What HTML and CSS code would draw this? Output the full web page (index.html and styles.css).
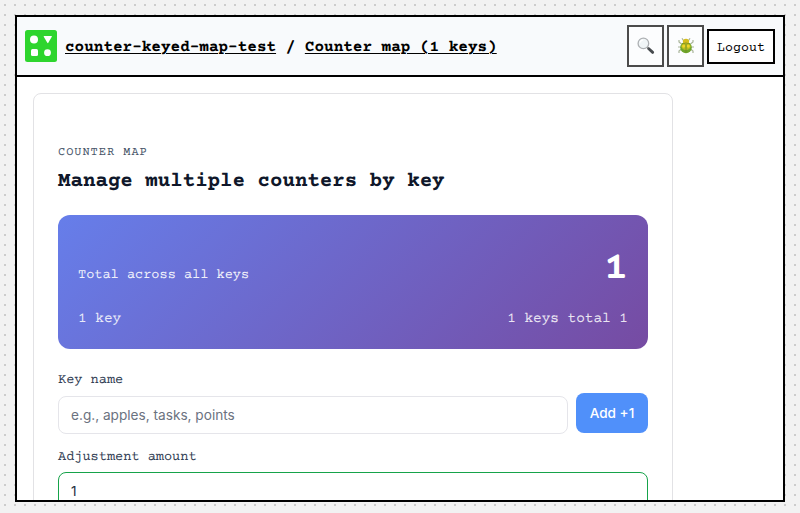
FILE: index.html
```html
<!DOCTYPE html>
<html lang="en">
<head>
<meta charset="utf-8">
<title>Counter map</title>
<link rel="stylesheet" href="styles.css">
</head>
<body>
<div class="window">
  <header class="bar">
    <svg class="logo" width="32" height="32" viewBox="0 0 32 32">
      <rect width="32" height="32" rx="2.5" fill="#2ed52e"/>
      <g fill="#fff"><circle cx="9" cy="9.5" r="4"/><path d="M19.2 6h7.2q.8 0 .4.8l-3.5 6q-.5.8-1 0l-3.5-6q-.4-.8.4-.8z"/><rect x="6" y="19" width="7" height="7" rx="1.5"/><circle cx="22.5" cy="22.7" r="3.4"/></g>
    </svg>
    <h1 class="crumbs"><a>counter-keyed-map-test</a> / <a>Counter map (1 keys)</a></h1>
    <div class="actions">
      <button class="tool" aria-label="Search"><svg width="18" height="18" viewBox="0 0 18 18"><path d="M11.5 11.5l4.2 3.9" stroke="#464a4e" stroke-width="2.8" stroke-linecap="round"/><path d="M9.7 9.7l1.7 1.6" stroke="#888" stroke-width="1.4"/><circle cx="6.4" cy="6.4" r="5.3" fill="#f0f5f7" stroke="#adb0b3" stroke-width="1.3"/><path d="M3 5.5q.7-2.3 3-2.6" fill="none" stroke="#fff" stroke-width="1.2"/></svg></button>
      <button class="tool" aria-label="Debug"><svg width="18" height="18" viewBox="0 0 18 18"><path d="M6.7 4L5 1.3M11.3 4L13 1.3M4.5 7L2 5V3M13.5 7l2.5-2V3M4 10H1M14 10h3M4.5 12L2 14v2M13.5 12l2.5 2v2" fill="none" stroke="#a9b59a" stroke-width="1.2"/><ellipse cx="9" cy="10.5" rx="5.8" ry="5.7" fill="#6fa52a"/><ellipse cx="9" cy="9.2" rx="4.6" ry="3.8" fill="#b8bd21"/><ellipse cx="9" cy="4.5" rx="3.1" ry="2.8" fill="#d5bd1d"/><path d="M5 7q4-2 8 0M9 7v8.5" fill="none" stroke="#718b23" stroke-width=".8"/><ellipse cx="6.7" cy="9.1" rx="1.5" ry="1.6" fill="#f0d629"/><ellipse cx="11.3" cy="9.1" rx="1.5" ry="1.6" fill="#f0d629"/></svg></button>
      <button class="logout">Logout</button>
    </div>
  </header>
  <main class="content">
    <section class="card">
      <p class="eyebrow">COUNTER MAP</p>
      <h2 class="heading">Manage multiple counters by key</h2>
      <div class="summary">
        <div class="total"><span class="total-label">Total across all keys</span><strong class="total-value">1</strong></div>
        <div class="detail"><span>1 key</span><span>1 keys total 1</span></div>
      </div>
      <div class="row">
        <label class="field grow"><span class="label">Key name</span><input class="input" placeholder="e.g., apples, tasks, points"></label>
        <button class="add">Add +1</button>
      </div>
      <label class="field amount"><span class="label">Adjustment amount</span><input class="input active" value="1"></label>
    </section>
  </main>
</div>
</body>
</html>
```
FILE: styles.css
```css
* { box-sizing: border-box; }
body {
  margin: 0;
  height: 513px;
  padding: 15px 15px 11px;
  overflow: hidden;
  background: #f2f2f2 conic-gradient(from 270deg at 2px 2px, #ccc 90deg, transparent 0) 4px 4px / 10px 10px;
  font-family: "Courier Prime", "Courier", "Liberation Mono", monospace;
  text-rendering: geometricPrecision;
}
h1, h2, p { margin: 0; }
button, input { margin: 0; font: inherit; }
.window {
  height: 487px;
  border: 2px solid #000;
  background: #fff;
  overflow: hidden;
}
.bar {
  display: flex;
  align-items: center;
  height: 60px;
  padding: 0 8px;
  border-bottom: 2px solid #000;
  background: #f8fafc;
}
.logo { flex: none; }
.crumbs { margin-left: 8px; padding-top: 4px; font-size: 16px; line-height: 20px; white-space: nowrap; }
.crumbs a { text-decoration: underline; text-decoration-thickness: 1px; text-underline-offset: 2px; }
.actions { display: flex; align-items: center; gap: 3px; margin-left: auto; }
.tool {
  display: flex;
  align-items: center;
  justify-content: center;
  width: 37px;
  height: 42px;
  padding: 0;
  border: 2px solid #4b4b4b;
  background: #fcfdfe;
}
.logout { width: 68px; height: 35px; padding: 4px 0 0; border: 2px solid #000; background: #fff; color: #000; font-size: 13.333px; }
.content { padding: 16px; }
.card {
  width: 640px;
  height: 620px;
  padding: 52px 24px 0;
  border: 1px solid #e2e2e5;
  border-radius: 8px;
}
.eyebrow { font-size: 12px; line-height: 16px; letter-spacing: .96px; color: #475569; }
.heading { margin-top: 8px; font-size: 20.8px; line-height: 26px; color: #0f172a; }
.summary {
  height: 134px;
  margin-top: 19px;
  padding: 30px 20px 0;
  border-radius: 12px;
  background: linear-gradient(135deg, #667eea 0%, #764ba2 100%);
  color: #fff;
}
.total { display: flex; justify-content: space-between; align-items: baseline; }
.total-label { font-size: 13.6px; opacity: .9; }
.total-value { font-size: 40px; line-height: 50px; }
.detail { display: flex; justify-content: space-between; margin-top: 15px; font-size: 14.4px; line-height: 18px; opacity: .85; }
.row { display: flex; align-items: flex-end; gap: 8px; margin-top: 23px; }
.field { display: flex; flex-direction: column; }
.grow { flex: 1; }
.label { margin-bottom: 8px; font-size: 13.6px; line-height: 16px; color: #334155; }
.input {
  width: 100%;
  height: 38px;
  padding: 0 12px;
  border: 1px solid #e5e5ea;
  border-radius: 8px;
  background: #fff;
  color: #273142;
  font: 13.65px/20px Inter, sans-serif;
  outline: none;
}
.input::placeholder { color: #6b7280; opacity: 1; }
.active { border-color: #16a34a; }
.add {
  width: 72px;
  height: 40px;
  margin-bottom: 1px;
  padding: 0;
  border: 0;
  border-radius: 8px;
  background: #5090fa;
  color: #fff;
  font: 500 13.6px/20px Inter, sans-serif;
}
.amount { margin-top: 15px; }
.amount .label { margin-bottom: 7px; }
```
